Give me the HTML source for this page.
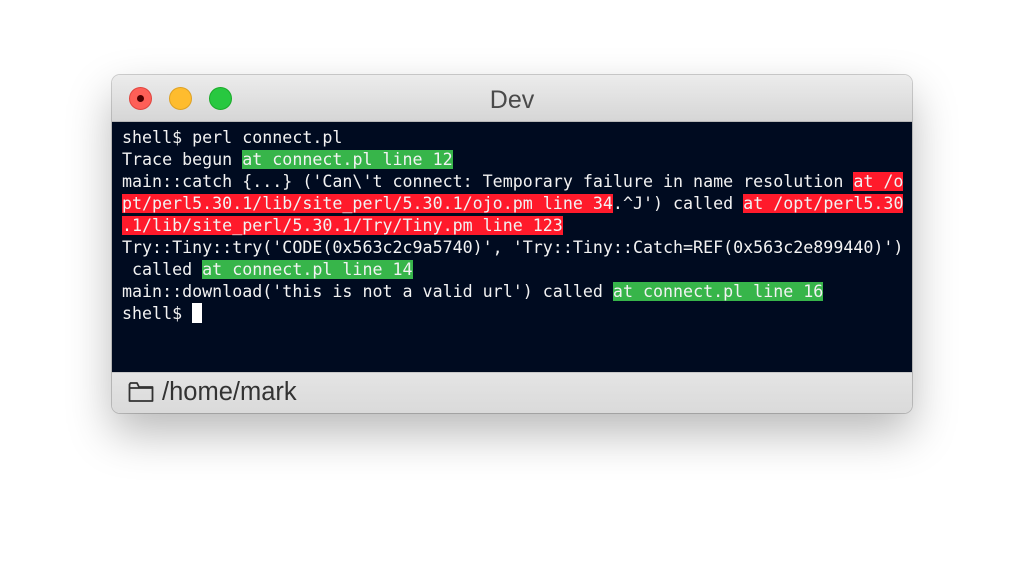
<!DOCTYPE html>
<html><head><style>
html,body{margin:0;padding:0;background:#fff;width:1024px;height:562px;overflow:hidden}
.win{position:absolute;left:112px;top:75px;width:800px;height:338px;border-radius:8px;overflow:hidden;box-shadow:0 20px 45px rgba(0,0,0,.28),0 0 0 1px rgba(0,0,0,.18)}
.title{height:47px;background:linear-gradient(#ececec,#d6d6d6);position:relative;border-bottom:1px solid #b8b8b8;box-sizing:border-box}
.title .t{position:absolute;left:0;right:0;top:11px;text-align:center;font:25px "Liberation Sans",sans-serif;color:#4a4a4a}
.b{position:absolute;top:12px;width:23px;height:23px;border-radius:50%;box-sizing:border-box}
.term{height:250px;background:#000b20;padding:5px 0 0 10px;box-sizing:border-box;font-family:"DejaVu Sans Mono",monospace;font-size:16.65px;line-height:22px;color:#f2f2f2;white-space:pre}
.g{background:#37b54a}.r{background:#ff1a2b}
.foot{height:41px;background:linear-gradient(#e4e4e4,#dadada);border-top:1px solid #c8c8c8;box-sizing:border-box;position:relative;font:25.5px "Liberation Sans",sans-serif;color:#333}
</style></head><body>
<div class="win">
<div class="title">
<div class="b" style="left:17px;background:#fe5f57;border:1px solid #e0443e"><div style="position:absolute;left:7px;top:7px;width:7px;height:7px;border-radius:50%;background:#4d0000"></div></div>
<div class="b" style="left:57px;background:#febc2e;border:1px solid #dea123"></div>
<div class="b" style="left:97px;background:#28c840;border:1px solid #1aab29"></div>
<div class="t">Dev</div>
</div>
<div class="term">shell$ perl connect.pl
Trace begun <span class="g">at connect.pl line 12</span>
main::catch {...} ('Can\'t connect: Temporary failure in name resolution <span class="r">at /o</span>
<span class="r">pt/perl5.30.1/lib/site_perl/5.30.1/ojo.pm line 34</span>.^J') called <span class="r">at /opt/perl5.30</span>
<span class="r">.1/lib/site_perl/5.30.1/Try/Tiny.pm line 123</span>
Try::Tiny::try('CODE(0x563c2c9a5740)', 'Try::Tiny::Catch=REF(0x563c2e899440)')
 called <span class="g">at connect.pl line 14</span>
main::download('this is not a valid url') called <span class="g">at connect.pl line 16</span>
shell$ <span style="display:inline-block;width:10px;height:20px;background:#fff;vertical-align:-4px"></span></div>
<div class="foot">
<svg style="position:absolute;left:16px;top:8px" width="26" height="22" viewBox="0 0 26 22"><path d="M1.5 3.5 V20 H24.5 V6 H11 L9 2 H2.5 Z M1.5 7 H24.5" fill="none" stroke="#333" stroke-width="1.8" stroke-linejoin="round"/></svg>
<div style="position:absolute;left:50px;top:5px">/home/mark</div>
</div>
</div>
</body></html>
